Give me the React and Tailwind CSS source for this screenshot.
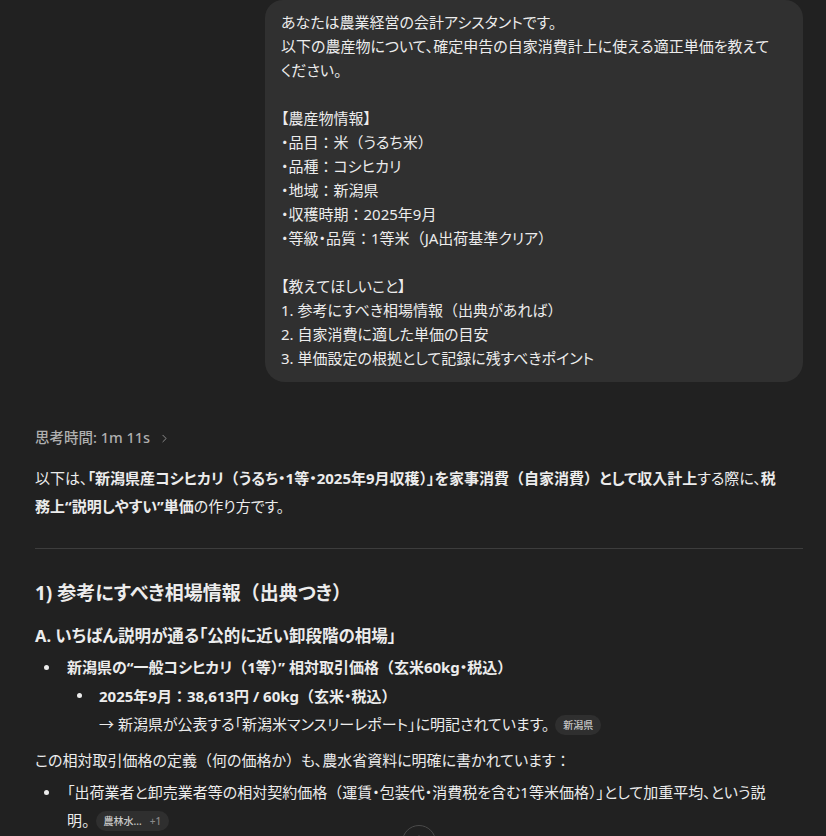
import React from 'react';
import { ChevronRight, ArrowDown } from 'lucide-react';

const font = "font-['Noto_Sans','Noto_Sans_CJK_JP',sans-serif] [font-feature-settings:'palt']";

// keep full-width brackets and colons at full width, like the reference font does
const W = ({ children }) =>
  String(children)
    .split(/([（）：])/)
    .map((p, i) =>
      /^[（）：]$/.test(p) ? (
        <span key={i} className="[font-feature-settings:normal]">{p}</span>
      ) : (
        p
      )
    );

const bubbleLines = [
  'あなたは農業経営の会計アシスタントです。',
  '以下の農産物について、確定申告の自家消費計上に使える適正単価を教えて',
  'ください。',
  '',
  '【農産物情報】',
  '・品目：米（うるち米）',
  '・品種：コシヒカリ',
  '・地域：新潟県',
  '・収穫時期：2025年9月',
  '・等級・品質：1等米（JA出荷基準クリア）',
  '',
  '【教えてほしいこと】',
  '1. 参考にすべき相場情報（出典があれば）',
  '2. 自家消費に適した単価の目安',
  '3. 単価設定の根拠として記録に残すべきポイント',
];

// small source chip shown after a sentence
const Chip = ({ label, extra }) => (
  <span className="ml-1.5 inline-flex h-[20px] items-center gap-2 rounded-full bg-[#2f2f2f] px-2 align-[1px] text-[10px] font-medium leading-none text-[#c8c8c8]">
    {label}
    {extra && <span className="text-[#8a8a8a]">{extra}</span>}
  </span>
);

const Dot = () => <span className="mt-[12px] h-[5px] w-[5px] shrink-0 rounded-full bg-[#ececec]" />;

export default function App() {
  return (
    <div className={`relative h-[836px] w-[826px] overflow-hidden bg-[#212121] text-[#ececec] ${font}`}>
      <div className="pl-[35px] pr-[23px]">
        {/* user message */}
        <div className="flex justify-end">
          <div className="w-[538px] rounded-[20px] rounded-t-[18px] bg-[#303030] px-4 pt-[10px] pb-3 text-[15px] leading-[24px]">
            {bubbleLines.map((l, i) => (
              <div key={i} className="h-[24px] whitespace-nowrap"><W>{l}</W></div>
            ))}
          </div>
        </div>

        {/* thinking time */}
        <div className="mt-[46px] flex h-[20px] items-center gap-1 text-[14.5px] font-medium text-[#afafaf]">
          思考時間: 1m 11s
          <ChevronRight size={13} strokeWidth={1.6} className="ml-1 text-[#9a9a9a]" />
        </div>

        <p className="mt-[16px] text-[15px] leading-[28px] whitespace-nowrap">
          以下は、<b className="font-bold"><W>「新潟県産コシヒカリ（うるち・1等・2025年9月収穫）」を家事消費（自家消費）として収入計上</W></b>する際に、<b className="font-bold">税</b>
          <br />
          <b className="font-bold">務上“説明しやすい”単価</b>の作り方です。
        </p>

        <hr className="mt-[28px] border-0 border-t border-[#3d3d3d]" />

        <h2 className="mt-[30px] text-[19px] font-bold leading-[28px]"><W>1) 参考にすべき相場情報（出典つき）</W></h2>

        <h3 className="mt-[17px] text-[16.5px] font-bold leading-[24px]">A. いちばん説明が通る「公的に近い卸段階の相場」</h3>

        <ul className="mt-[5px] text-[15px] leading-[28px]">
          <li className="flex">
            <span className="flex w-[32px] justify-start pl-[9px]"><Dot /></span>
            <div>
              <div className="font-bold"><W>新潟県の“一般コシヒカリ（1等）” 相対取引価格（玄米60kg・税込）</W></div>
              <div className="flex">
                <span className="flex w-[32px] pl-[10px]"><Dot /></span>
                <div>
                  <div className="mt-[1px] font-bold"><W>2025年9月：38,613円 / 60kg（玄米・税込）</W></div>
                  <div className="whitespace-nowrap">→ 新潟県が公表する「新潟米マンスリーレポート」に明記されています。<Chip label="新潟県" /></div>
                </div>
              </div>
            </div>
          </li>
        </ul>

        <p className="mt-[8px] text-[15px] leading-[28px]"><W>この相対取引価格の定義（何の価格か）も、農水省資料に明確に書かれています：</W></p>

        <ul className="mt-[4px] text-[15px] leading-[28px]">
          <li className="flex">
            <span className="flex w-[32px] pl-[9px]"><Dot /></span>
            <div className="whitespace-nowrap">
              <W>「出荷業者と卸売業者等の相対契約価格（運賃・包装代・消費税を含む1等米価格）」として加重平均、という説</W>
              <br />
              明。<Chip label="農林水..." extra="+1" />
            </div>
          </li>
        </ul>
      </div>

      {/* scroll to bottom button */}
      <div className="absolute top-[825px] left-[402px] flex h-[34px] w-[34px] items-start justify-center rounded-full border border-[#4a4a4a] bg-[#212121] pt-[7px]">
        <ArrowDown size={16} strokeWidth={2} className="text-[#ececec]" />
      </div>
    </div>
  );
}
